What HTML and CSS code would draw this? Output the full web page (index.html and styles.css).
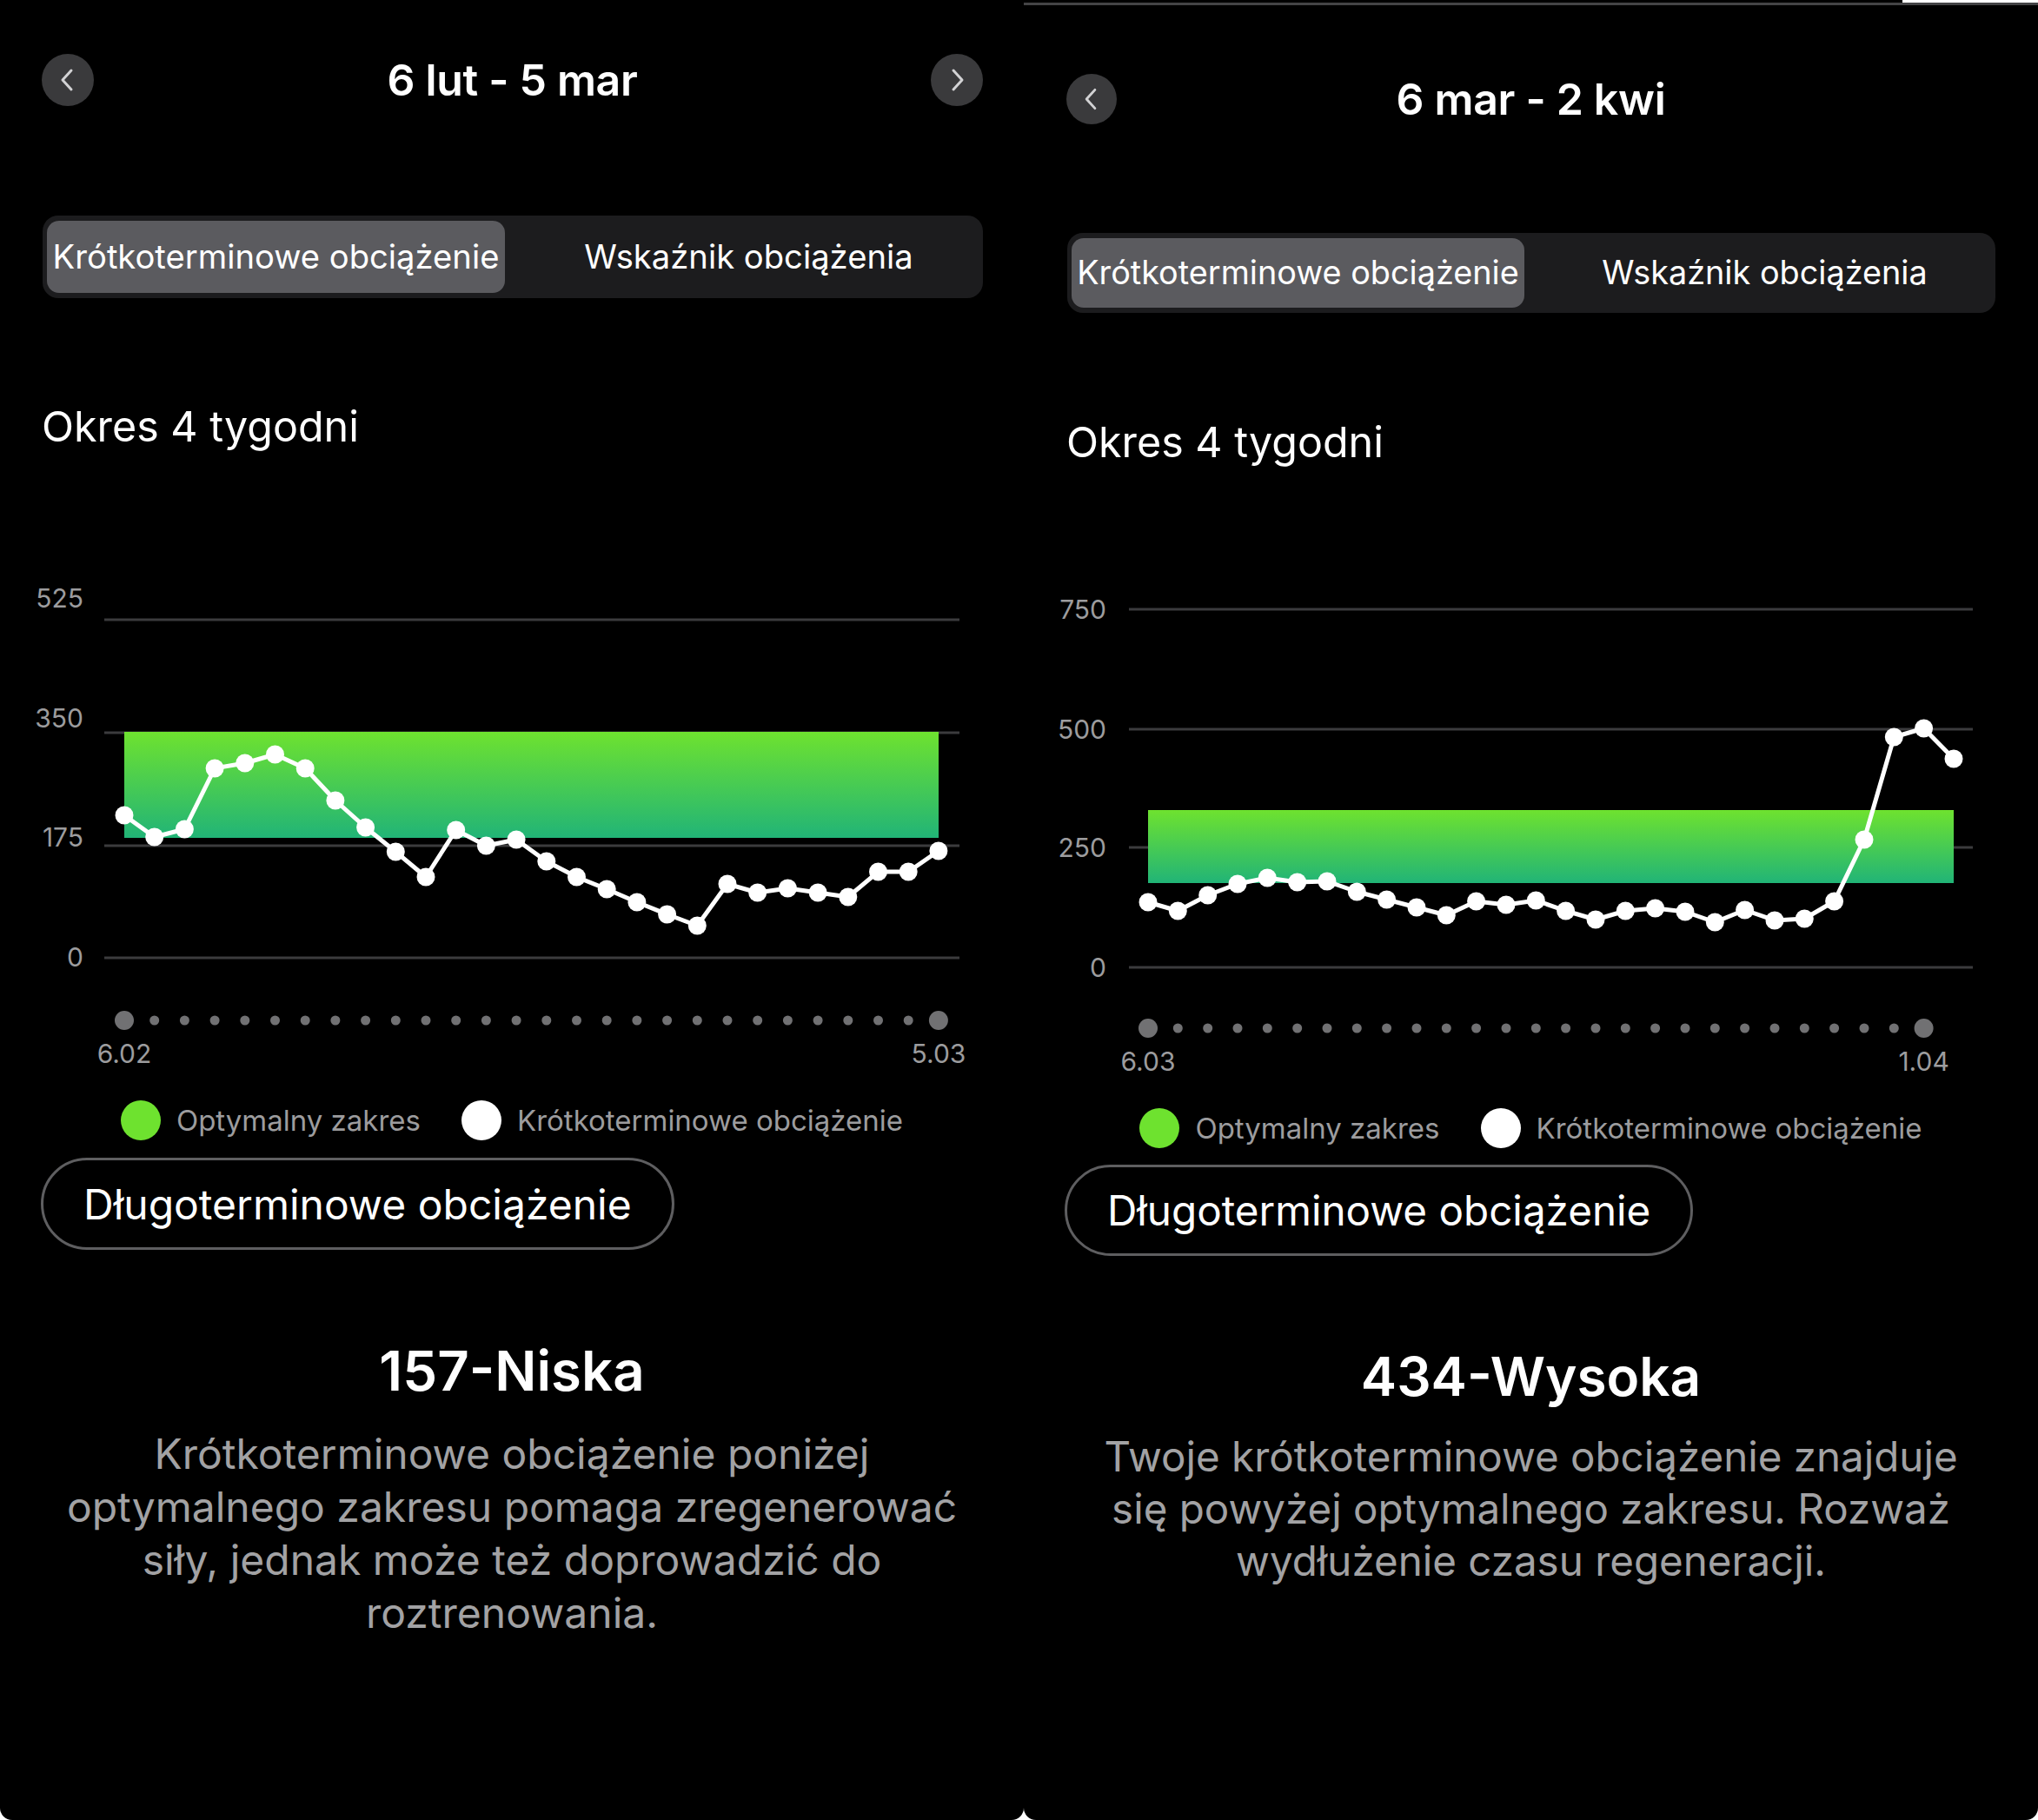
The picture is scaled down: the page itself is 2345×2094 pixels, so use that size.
FILE: index.html
```html
<!DOCTYPE html>
<html lang="pl">
<head>
<meta charset="utf-8">
<title>Krótkoterminowe obciążenie</title>
<link rel="stylesheet" href="styles.css">
</head>
<body>
<main class="screens">

  <section class="panel panel-a">
    <header class="nav">
      <button class="nav-btn" aria-label="Poprzedni okres">
        <svg viewBox="0 0 60 60" class="chev"><path d="M34 19 L24 30 L34 41"/></svg>
      </button>
      <h1 class="nav-title">6 lut - 5 mar</h1>
      <button class="nav-btn" aria-label="Następny okres">
        <svg viewBox="0 0 60 60" class="chev"><path d="M26 19 L36 30 L26 41"/></svg>
      </button>
    </header>

    <div class="segmented">
      <span class="seg seg-active">Krótkoterminowe obciążenie</span>
      <span class="seg">Wskaźnik obciążenia</span>
    </div>

    <h2 class="period">Okres 4 tygodni</h2>

    <svg class="chart chart-a" viewBox="0 640 1178 590" width="1178" height="590">
      <defs>
        <linearGradient id="bandA" x1="0" y1="0" x2="0" y2="1">
          <stop offset="0" stop-color="#6ee22f"/>
          <stop offset="1" stop-color="#21b477"/>
        </linearGradient>
      </defs>
      <g class="grid">
        <line x1="120" y1="713" x2="1104" y2="713"/>
        <line x1="120" y1="843" x2="1104" y2="843"/>
        <line x1="120" y1="973" x2="1104" y2="973"/>
        <line x1="120" y1="1102" x2="1104" y2="1102"/>
      </g>
      <g class="ylab">
        <text x="96" y="699">525</text>
        <text x="96" y="837">350</text>
        <text x="96" y="974">175</text>
        <text x="96" y="1112">0</text>
      </g>
      <rect x="143" y="842" width="937" height="122" fill="url(#bandA)"/>
      <polyline class="series" points="143,938 177.7,963 212.4,954 247.1,884 281.8,878 316.5,868 351.2,884 385.9,921 420.6,952 455.3,980 490,1009 524.7,955 559.4,973 594.1,966 628.8,991 663.5,1009 698.2,1023 732.9,1038 767.6,1052 802.3,1065 837,1017 871.7,1027 906.4,1022 941.1,1027 975.8,1032 1010.5,1003 1045.2,1003 1079.9,979"/>
      <g class="pts">
        <circle cx="143" cy="938" r="10.5"/><circle cx="177.7" cy="963" r="10.5"/><circle cx="212.4" cy="954" r="10.5"/><circle cx="247.1" cy="884" r="10.5"/>
        <circle cx="281.8" cy="878" r="10.5"/><circle cx="316.5" cy="868" r="10.5"/><circle cx="351.2" cy="884" r="10.5"/><circle cx="385.9" cy="921" r="10.5"/>
        <circle cx="420.6" cy="952" r="10.5"/><circle cx="455.3" cy="980" r="10.5"/><circle cx="490" cy="1009" r="10.5"/><circle cx="524.7" cy="955" r="10.5"/>
        <circle cx="559.4" cy="973" r="10.5"/><circle cx="594.1" cy="966" r="10.5"/><circle cx="628.8" cy="991" r="10.5"/><circle cx="663.5" cy="1009" r="10.5"/>
        <circle cx="698.2" cy="1023" r="10.5"/><circle cx="732.9" cy="1038" r="10.5"/><circle cx="767.6" cy="1052" r="10.5"/><circle cx="802.3" cy="1065" r="10.5"/>
        <circle cx="837" cy="1017" r="10.5"/><circle cx="871.7" cy="1027" r="10.5"/><circle cx="906.4" cy="1022" r="10.5"/><circle cx="941.1" cy="1027" r="10.5"/>
        <circle cx="975.8" cy="1032" r="10.5"/><circle cx="1010.5" cy="1003" r="10.5"/><circle cx="1045.2" cy="1003" r="10.5"/><circle cx="1079.9" cy="979" r="10.5"/>
      </g>
      <g class="axis-dots">
        <circle cx="143" cy="1174" r="11"/><circle cx="177.7" cy="1174" r="5.5"/><circle cx="212.4" cy="1174" r="5.5"/><circle cx="247.1" cy="1174" r="5.5"/>
        <circle cx="281.8" cy="1174" r="5.5"/><circle cx="316.5" cy="1174" r="5.5"/><circle cx="351.2" cy="1174" r="5.5"/><circle cx="385.9" cy="1174" r="5.5"/>
        <circle cx="420.6" cy="1174" r="5.5"/><circle cx="455.3" cy="1174" r="5.5"/><circle cx="490" cy="1174" r="5.5"/><circle cx="524.7" cy="1174" r="5.5"/>
        <circle cx="559.4" cy="1174" r="5.5"/><circle cx="594.1" cy="1174" r="5.5"/><circle cx="628.8" cy="1174" r="5.5"/><circle cx="663.5" cy="1174" r="5.5"/>
        <circle cx="698.2" cy="1174" r="5.5"/><circle cx="732.9" cy="1174" r="5.5"/><circle cx="767.6" cy="1174" r="5.5"/><circle cx="802.3" cy="1174" r="5.5"/>
        <circle cx="837" cy="1174" r="5.5"/><circle cx="871.7" cy="1174" r="5.5"/><circle cx="906.4" cy="1174" r="5.5"/><circle cx="941.1" cy="1174" r="5.5"/>
        <circle cx="975.8" cy="1174" r="5.5"/><circle cx="1010.5" cy="1174" r="5.5"/><circle cx="1045.2" cy="1174" r="5.5"/><circle cx="1079.9" cy="1174" r="11"/>
      </g>
      <g class="xlab">
        <text x="143" y="1223">6.02</text>
        <text x="1080" y="1223">5.03</text>
      </g>
    </svg>

    <ul class="legend">
      <li class="legend-item"><span class="dot dot-green"></span>Optymalny zakres</li>
      <li class="legend-item"><span class="dot dot-white"></span>Krótkoterminowe obciążenie</li>
    </ul>

    <button class="pill">Długoterminowe obciążenie</button>

    <p class="value">157-Niska</p>
    <p class="desc">Krótkoterminowe obciążenie poniżej<br>optymalnego zakresu pomaga zregenerować<br>siły, jednak może też doprowadzić do<br>roztrenowania.</p>
  </section>

  <section class="panel panel-b">
    <div class="topline"></div>
    <header class="nav">
      <button class="nav-btn" aria-label="Poprzedni okres">
        <svg viewBox="0 0 60 60" class="chev"><path d="M34 19 L24 30 L34 41"/></svg>
      </button>
      <h1 class="nav-title">6 mar - 2 kwi</h1>
      <span class="nav-spacer"></span>
    </header>

    <div class="segmented">
      <span class="seg seg-active">Krótkoterminowe obciążenie</span>
      <span class="seg">Wskaźnik obciążenia</span>
    </div>

    <h2 class="period">Okres 4 tygodni</h2>

    <svg class="chart chart-b" viewBox="0 640 1167 600" width="1167" height="600">
      <defs>
        <linearGradient id="bandB" x1="0" y1="0" x2="0" y2="1">
          <stop offset="0" stop-color="#6ee22f"/>
          <stop offset="1" stop-color="#21b477"/>
        </linearGradient>
      </defs>
      <g class="grid">
        <line x1="121" y1="701" x2="1092" y2="701"/>
        <line x1="121" y1="839" x2="1092" y2="839"/>
        <line x1="121" y1="975" x2="1092" y2="975"/>
        <line x1="121" y1="1113" x2="1092" y2="1113"/>
      </g>
      <g class="ylab">
        <text x="95" y="712">750</text>
        <text x="95" y="850">500</text>
        <text x="95" y="986">250</text>
        <text x="95" y="1124">0</text>
      </g>
      <rect x="143" y="932" width="927" height="84" fill="url(#bandB)"/>
      <polyline class="series" points="143,1038 177.3,1048 211.7,1030 246,1017 280.3,1010 314.7,1015 349,1014 383.3,1026 417.6,1035 452,1044 486.3,1053 520.6,1037 555,1041 589.3,1036 623.6,1048 658,1058 692.3,1048 726.6,1045 761,1049 795.3,1061 829.6,1047 864,1059 898.3,1057 932.6,1037 967,966 1001.3,848 1035.6,838 1070,873"/>
      <g class="pts">
        <circle cx="143" cy="1038" r="10.5"/><circle cx="177.3" cy="1048" r="10.5"/><circle cx="211.7" cy="1030" r="10.5"/><circle cx="246" cy="1017" r="10.5"/>
        <circle cx="280.3" cy="1010" r="10.5"/><circle cx="314.7" cy="1015" r="10.5"/><circle cx="349" cy="1014" r="10.5"/><circle cx="383.3" cy="1026" r="10.5"/>
        <circle cx="417.6" cy="1035" r="10.5"/><circle cx="452" cy="1044" r="10.5"/><circle cx="486.3" cy="1053" r="10.5"/><circle cx="520.6" cy="1037" r="10.5"/>
        <circle cx="555" cy="1041" r="10.5"/><circle cx="589.3" cy="1036" r="10.5"/><circle cx="623.6" cy="1048" r="10.5"/><circle cx="658" cy="1058" r="10.5"/>
        <circle cx="692.3" cy="1048" r="10.5"/><circle cx="726.6" cy="1045" r="10.5"/><circle cx="761" cy="1049" r="10.5"/><circle cx="795.3" cy="1061" r="10.5"/>
        <circle cx="829.6" cy="1047" r="10.5"/><circle cx="864" cy="1059" r="10.5"/><circle cx="898.3" cy="1057" r="10.5"/><circle cx="932.6" cy="1037" r="10.5"/>
        <circle cx="967" cy="966" r="10.5"/><circle cx="1001.3" cy="848" r="10.5"/><circle cx="1035.6" cy="838" r="10.5"/><circle cx="1070" cy="873" r="10.5"/>
      </g>
      <g class="axis-dots">
        <circle cx="143" cy="1183" r="11"/><circle cx="177.3" cy="1183" r="5.5"/><circle cx="211.7" cy="1183" r="5.5"/><circle cx="246" cy="1183" r="5.5"/>
        <circle cx="280.3" cy="1183" r="5.5"/><circle cx="314.7" cy="1183" r="5.5"/><circle cx="349" cy="1183" r="5.5"/><circle cx="383.3" cy="1183" r="5.5"/>
        <circle cx="417.6" cy="1183" r="5.5"/><circle cx="452" cy="1183" r="5.5"/><circle cx="486.3" cy="1183" r="5.5"/><circle cx="520.6" cy="1183" r="5.5"/>
        <circle cx="555" cy="1183" r="5.5"/><circle cx="589.3" cy="1183" r="5.5"/><circle cx="623.6" cy="1183" r="5.5"/><circle cx="658" cy="1183" r="5.5"/>
        <circle cx="692.3" cy="1183" r="5.5"/><circle cx="726.6" cy="1183" r="5.5"/><circle cx="761" cy="1183" r="5.5"/><circle cx="795.3" cy="1183" r="5.5"/>
        <circle cx="829.6" cy="1183" r="5.5"/><circle cx="864" cy="1183" r="5.5"/><circle cx="898.3" cy="1183" r="5.5"/><circle cx="932.6" cy="1183" r="5.5"/>
        <circle cx="967" cy="1183" r="5.5"/><circle cx="1001.3" cy="1183" r="5.5"/><circle cx="1035.6" cy="1183" r="11"/>
      </g>
      <g class="xlab">
        <text x="143" y="1232">6.03</text>
        <text x="1035.6" y="1232">1.04</text>
      </g>
    </svg>

    <ul class="legend">
      <li class="legend-item"><span class="dot dot-green"></span>Optymalny zakres</li>
      <li class="legend-item"><span class="dot dot-white"></span>Krótkoterminowe obciążenie</li>
    </ul>

    <button class="pill">Długoterminowe obciążenie</button>

    <p class="value">434-Wysoka</p>
    <p class="desc">Twoje krótkoterminowe obciążenie znajduje<br>się powyżej optymalnego zakresu. Rozważ<br>wydłużenie czasu regeneracji.</p>
  </section>

</main>
</body>
</html>
```

FILE: styles.css
```css
* {
  box-sizing: border-box;
  margin: 0;
  padding: 0;
}

html,
body {
  background: #ffffff;
}

body {
  width: 2345px;
  height: 2094px;
  overflow: hidden;
  font-family: Inter, "Liberation Sans", sans-serif;
  color: #fff;
}

.screens {
  display: flex;
  height: 2094px;
}

.panel {
  display: flex;
  flex-direction: column;
  height: 2094px;
  background: #000;
  border-radius: 0 0 14px 14px;
  overflow: hidden;
}

.panel-a {
  width: 1178px;
}

.panel-b {
  width: 1167px;
}

.topline {
  flex: none;
  height: 6px;
  background:
    linear-gradient(#444446, #444446) left bottom / 100% 3px no-repeat,
    linear-gradient(90deg, #000 1011px, #fff 1011px) left top / 100% 3px no-repeat;
}

/* navigation header */
.nav {
  display: grid;
  grid-template-columns: 60px 1fr 60px;
  align-items: center;
  height: 60px;
  margin-top: 62px;
  padding: 0 47px 0 48px;
}

.panel-b .nav {
  grid-template-columns: 58px 1fr 58px;
  height: 58px;
  margin-top: 78px;
  padding: 0 49px;
}

.nav-btn {
  width: 100%;
  aspect-ratio: 1;
  border: none;
  border-radius: 50%;
  background: #3a3a3c;
  display: flex;
  align-items: center;
  justify-content: center;
}

.chev {
  width: 100%;
  height: 100%;
  fill: none;
  stroke: #d2d2d4;
  stroke-width: 3;
  stroke-linecap: round;
  stroke-linejoin: round;
}

.nav-title {
  text-align: center;
  font-size: 50px;
  font-weight: 600;
  line-height: 60px;
  letter-spacing: -0.3px;
}

/* segmented control */
.segmented {
  display: grid;
  grid-template-columns: 527px 1fr;
  height: 95px;
  margin: 126px 47px 0 49px;
  padding: 6px 5px;
  border-radius: 18px;
  background: #1c1c1e;
}

.panel-b .segmented {
  grid-template-columns: 521px 1fr;
  height: 92px;
  margin: 126px 49px 0 50px;
}

.seg {
  display: flex;
  align-items: center;
  justify-content: center;
  border-radius: 14px;
  font-size: 38.2px;
  line-height: 1;
  white-space: nowrap;
  color: #fff;
  padding-left: 16px;
}

.seg-active {
  padding-left: 0;
  background: #5b5b5f;
}

.panel-b .seg {
  font-size: 37.8px;
}

/* period title */
.period {
  margin-top: 119px;
  padding-left: 48px;
  font-size: 48.4px;
  font-weight: 400;
  line-height: 58px;
}

.panel-b .period {
  margin-top: 120px;
  padding-left: 49px;
}

/* charts */
.chart {
  display: block;
  flex: none;
  margin-top: 120px;
}

.chart-b {
  margin-top: 102px;
}

.grid line {
  stroke: #3b3b3d;
  stroke-width: 3;
}

.ylab text,
.xlab text {
  font-family: Inter, "Liberation Sans", sans-serif;
  font-size: 30px;
  fill: #9c9c9e;
}

.ylab text {
  text-anchor: end;
}

.xlab text {
  text-anchor: middle;
}

.series {
  fill: none;
  stroke: #fff;
  stroke-width: 5;
  stroke-linejoin: round;
}

.pts circle {
  fill: #fff;
}

.axis-dots circle {
  fill: #717173;
}

/* legend */
.legend {
  list-style: none;
  display: flex;
  justify-content: center;
  align-items: center;
  gap: 47px;
  height: 48px;
  margin-top: 35px;
}

.panel-b .legend {
  margin-top: 34px;
}

.legend-item {
  display: flex;
  align-items: center;
  gap: 18px;
  font-size: 33px;
  color: #9c9c9e;
  white-space: nowrap;
}

.dot {
  width: 46px;
  height: 46px;
  border-radius: 50%;
  flex: none;
}

.dot-green {
  background: #6ee22f;
}

.dot-white {
  background: #fff;
}

/* pill button */
.pill {
  align-self: flex-start;
  height: 106px;
  margin: 19px 0 0 47px;
  padding: 0 46px;
  border: 3px solid #5e5e60;
  border-radius: 60px;
  background: transparent;
  color: #fff;
  font-family: Inter, "Liberation Sans", sans-serif;
  font-size: 48px;
  white-space: nowrap;
}

.panel-b .pill {
  height: 105px;
  margin: 18px 0 0 47px;
  font-size: 47.6px;
}

/* result */
.value {
  margin-top: 101px;
  text-align: center;
  font-size: 63.5px;
  font-weight: 600;
  line-height: 76px;
}

.panel-b .value {
  font-size: 62px;
}

.desc {
  margin-top: 27px;
  text-align: center;
  font-size: 48px;
  line-height: 61px;
  color: #a2a2a4;
}

.panel-b .desc {
  margin-top: 24px;
  font-size: 47.5px;
  line-height: 60px;
}
```
